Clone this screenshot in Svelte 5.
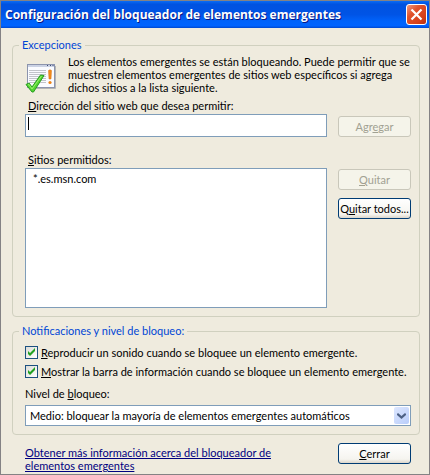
<script lang="ts">
  let address = $state('');
  let sites = $state(['*.es.msn.com']);
  let selected = $state<string[]>([]);
  let playSound = $state(true);
  let showBar = $state(true);
  let level = $state('medium');
  let open = $state(true);

  function add() {
    sites = [...sites, address.trim()];
    address = '';
  }

  function remove() {
    sites = sites.filter((s) => !selected.includes(s));
    selected = [];
  }

  function removeAll() {
    sites = [];
    selected = [];
  }
</script>

{#if open}
  <div class="window" role="dialog" aria-labelledby="title">
    <header>
      <h1 id="title">Configuración del bloqueador de elementos emergentes</h1>
      <button class="close" aria-label="Cerrar ventana" onclick={() => (open = false)}>
        <svg width="21" height="21" viewBox="0 0 21 21">
          <path d="M5.500 5.500L15.500 15.500M15.500 5.500L5.500 15.500" stroke="#fff" stroke-width="2.2" />
        </svg>
      </button>
    </header>

    <main>
      <fieldset>
        <legend>Excepciones</legend>
        <div class="intro">
          <svg width="32" height="32" viewBox="0 0 32 32">
            <path d="M4 27.500H30.500V5" fill="none" stroke="#b5b5b2" />
            <rect x="2.500" y="3.500" width="27" height="23" fill="#fafbff" stroke="#8c94ad" />
            <path d="M3 5H29" stroke="#cbd2e4" stroke-width="2" />
            <path d="M22 4.500h1M25 4.500h1M27.500 4.500h1" stroke="#3d4b78" />
            <path d="M4 9.500H21M4 11.500H21M4 13.500H21M4 15.500H21M4 17.500H21M4 19.500H21M4 21.500H21" stroke="#c2c4ca" />
            <path d="M23.500 9.500Q25 8 26.500 9.500L26 18H24Z" fill="#f28a1c" stroke="#d9730c" stroke-width=".5" />
            <circle cx="25" cy="21.500" r="1.600" fill="#ef8213" />
            <path d="M1 23.500L4 22L7 26L15.500 14L19 14.500L8.500 31H7Z" fill="#55d532" stroke="#279d20" />
            <path d="M3 24L4 23.500L7 28L16.500 15" fill="none" stroke="#9af36f" />
          </svg>
          <p>
            Los elementos emergentes se están bloqueando. Puede permitir que se
            muestren elementos emergentes de sitios web específicos si agrega
            dichos sitios a la lista siguiente.
          </p>
        </div>

        <div class="row address">
          <div class="field">
            <label for="address"><u>D</u>irección del sitio web que desea permitir:</label>
            <div class="box">
              <input id="address" type="text" bind:value={address} />
              {#if !address}<span class="caret"></span>{/if}
            </div>
          </div>
          <button class="btn" disabled={!address.trim()} onclick={add}>Agr<u>e</u>gar</button>
        </div>

        <div class="row sites">
          <div class="field">
            <label for="sites"><u>S</u>itios permitidos:</label>
            <select id="sites" class="list" multiple bind:value={selected}>
              {#each sites as site}
                <option value={site}>{site}</option>
              {/each}
            </select>
          </div>
          <div class="stack">
            <button class="btn" disabled={!selected.length} onclick={remove}><u>Q</u>uitar</button>
            <button class="btn" disabled={!sites.length} onclick={removeAll}>Q<u>u</u>itar todos...</button>
          </div>
        </div>
      </fieldset>

      <fieldset class="notify">
        <legend>Notificaciones y nivel de bloqueo:</legend>
        <label class="check">
          <input type="checkbox" bind:checked={playSound} />
          <svg width="13" height="13" viewBox="0 0 13 13"><path d="M3 5V8L5 10L10 5V2L5 7Z" fill="#21a121" /></svg>
          <span><u>R</u>eproducir un sonido cuando se bloquee un elemento emergente.</span>
        </label>
        <label class="check">
          <input type="checkbox" bind:checked={showBar} />
          <svg width="13" height="13" viewBox="0 0 13 13"><path d="M3 5V8L5 10L10 5V2L5 7Z" fill="#21a121" /></svg>
          <span><u>M</u>ostrar la barra de información cuando se bloquee un elemento emergente.</span>
        </label>
        <label class="level" for="level">Nivel de <u>b</u>loqueo:</label>
        <div class="box">
          <select id="level" class="combo" bind:value={level}>
            <option value="high">Alto: bloquear todos los elementos emergentes</option>
            <option value="medium">Medio: bloquear la mayoría de elementos emergentes automáticos</option>
            <option value="low">Bajo: permitir elementos emergentes de sitios seguros</option>
          </select>
          <span class="arrow">
            <svg width="9" height="6" viewBox="0 0 9 6"><path d="M0 1L1 0L4.500 3L8 0L9 1V2L4.500 6L0 2Z" fill="#4d6185" /></svg>
          </span>
        </div>
      </fieldset>

      <footer>
        <a href="#ayuda">Obtener más información acerca del bloqueador de elementos emergentes</a>
        <button class="btn" onclick={() => (open = false)}><u>C</u>errar</button>
      </footer>
    </main>
  </div>
{/if}

<style>
  :global(body) {
    background: #efebde;
  }
  .window {
    box-sizing: border-box;
    min-height: 100vh;
    border: 1px solid #848284;
    background: #efebde;
    color: #000;
    font: 11px/13px Lato, "Liberation Sans", Arial, sans-serif;
  }
  .window * {
    box-sizing: border-box;
  }
  header {
    display: flex;
    align-items: center;
    justify-content: space-between;
    height: 27px;
    padding: 0 2px 0 4px;
    background: linear-gradient(#0a6cf5 0%, #0052e0 12%, #0054e6 50%, #0063fb 75%, #0064ff 92%, #0047cf 100%);
  }
  h1 {
    margin: 0;
    color: #fff;
    font: bold 12px/16px "Open Sans", "Trebuchet MS", sans-serif;
    text-shadow: 1px 1px #0a1883;
    white-space: nowrap;
  }
  .close {
    width: 21px;
    height: 21px;
    padding: 0;
    border: 1px solid #fff;
    border-radius: 3px;
    background: linear-gradient(135deg, #f09a80, #e0532c 35%, #d6401a 75%, #b5300f);
  }
  .close svg {
    display: block;
    margin: -1px;
  }
  main {
    padding: 10px 9px 0 11px;
  }
  fieldset {
    min-width: 0;
    margin: 0;
    padding: 3px 8px 8px 12px;
    border: 1px solid #d0d0bf;
    border-radius: 4px;
  }
  legend {
    margin-left: -6px;
    padding: 0 3px;
    color: #0046d5;
    line-height: 14px;
  }
  u {
    text-underline-offset: 1px;
  }
  .intro {
    display: flex;
    gap: 11px;
  }
  .intro svg {
    flex: none;
    margin-top: 6px;
  }
  .intro p {
    margin: 0;
  }
  .row {
    display: flex;
    gap: 11px;
  }
  .field {
    flex: 1;
    min-width: 0;
  }
  .field label {
    display: block;
    padding-left: 3px;
    margin-bottom: 2px;
  }
  .address {
    align-items: flex-end;
    margin-top: 5px;
  }
  .sites {
    margin-top: 16px;
  }
  .stack {
    display: flex;
    flex-direction: column;
    gap: 8px;
    padding-top: 16px;
  }
  .box {
    position: relative;
  }
  input[type='text'],
  select {
    display: block;
    width: 100%;
    margin: 0;
    border: 1px solid #7f9db9;
    border-radius: 0;
    background: #fff;
    color: #000;
    font: inherit;
    outline: none;
  }
  input[type='text'] {
    height: 23px;
    padding: 0 3px;
  }
  .caret {
    position: absolute;
    top: 3px;
    left: 3px;
    width: 1px;
    height: 13px;
    background: #000;
    pointer-events: none;
  }
  input:focus + .caret {
    display: none;
  }
  .list {
    height: 140px;
    padding: 3px 0;
    overflow: auto;
  }
  .list option {
    min-height: 13px;
    padding: 0 7px;
  }
  .combo {
    appearance: none;
    height: 21px;
    padding: 0 20px 0 4px;
  }
  .arrow {
    position: absolute;
    top: 2px;
    right: 2px;
    display: flex;
    align-items: center;
    justify-content: center;
    width: 15px;
    height: 17px;
    border-radius: 2px;
    background: linear-gradient(135deg, #dde7ff, #b9cdfa);
    pointer-events: none;
  }
  .btn {
    flex: none;
    width: 73px;
    height: 21px;
    padding: 0;
    border: 1px solid #003c74;
    border-radius: 3px;
    background: linear-gradient(#fff, #f5f4ef 80%, #dcd6cb);
    color: #000;
    font: inherit;
    white-space: nowrap;
  }
  .btn:disabled {
    border-color: #c9c7ba;
    background: #f5f4ea;
    color: #a1a192;
  }
  .notify {
    margin-top: 7px;
    padding-top: 5px;
  }
  .check {
    position: relative;
    display: flex;
    align-items: center;
    gap: 3px;
    height: 19px;
    white-space: nowrap;
  }
  .check input {
    appearance: none;
    flex: none;
    width: 13px;
    height: 13px;
    margin: 0;
    border: 1px solid #1c5180;
    background: linear-gradient(135deg, #dcdcd7, #fff);
  }
  .check svg {
    position: absolute;
    left: 0;
    visibility: hidden;
    pointer-events: none;
  }
  .check input:checked + svg {
    visibility: visible;
  }
  .level {
    display: block;
    margin: 6px 0 5px;
  }
  footer {
    display: flex;
    align-items: flex-start;
    justify-content: space-between;
    padding: 8px 9px 0 13px;
  }
  footer a {
    max-width: 260px;
    margin-top: 3px;
    color: #000080;
  }
</style>
